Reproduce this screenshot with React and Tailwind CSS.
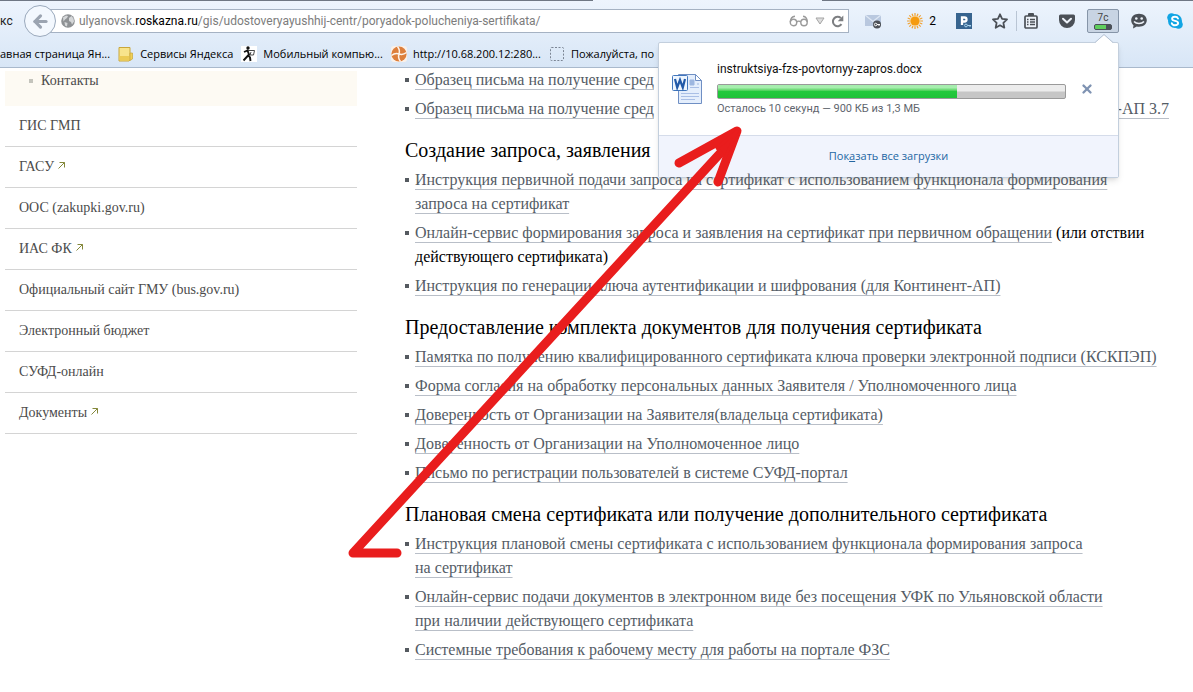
import { ArrowLeft, X } from 'lucide-react'

const bookmarks = [
  { label: 'Сервисы Яндекса', icon: FolderIcon },
  { label: 'Мобильный компью...', icon: RunnerIcon },
  { label: 'http://10.68.200.12:280...', icon: JoomlaIcon },
  { label: 'Пожалуйста, по', icon: BlankIcon },
]

const sideLinks = [
  { label: 'ГИС ГМП' },
  { label: 'ГАСУ', external: true },
  { label: 'ООС (zakupki.gov.ru)' },
  { label: 'ИАС ФК', external: true },
  { label: 'Официальный сайт ГМУ (bus.gov.ru)' },
  { label: 'Электронный бюджет' },
  { label: 'СУФД-онлайн' },
  { label: 'Документы', external: true },
]

const sections = [
  {
    items: [
      { lines: ['Образец письма на получение сред'] },
      { lines: ['Образец письма на получение сред'], tail: '-АП 3.7' },
    ],
  },
  {
    title: 'Создание запроса, заявления',
    items: [
      { lines: ['Инструкция первичной подачи запроса на сертификат с использованием функционала формирования', 'запроса на сертификат'] },
      {
        lines: ['Онлайн-сервис формирования запроса и заявления на сертификат при первичном обращении'],
        note: ['(или отствии', 'действующего сертификата)'],
      },
      { lines: ['Инструкция по генерации ключа аутентификации и шифрования (для Континент-АП)'] },
    ],
  },
  {
    title: 'Предоставление комплекта документов для получения сертификата',
    items: [
      { lines: ['Памятка по получению квалифицированного сертификата ключа проверки электронной подписи (КСКПЭП)'] },
      { lines: ['Форма согласия на обработку персональных данных Заявителя / Уполномоченного лица'] },
      { lines: ['Доверенность от Организации на Заявителя(владельца сертификата)'] },
      { lines: ['Доверенность от Организации на Уполномоченное лицо'] },
      { lines: ['Письмо по регистрации пользователей в системе СУФД-портал'] },
    ],
  },
  {
    title: 'Плановая смена сертификата или получение дополнительного сертификата',
    items: [
      { lines: ['Инструкция плановой смены сертификата с использованием функционала формирования запроса', 'на сертификат'] },
      { lines: ['Онлайн-сервис подачи документов в электронном виде без посещения УФК по Ульяновской области', 'при наличии действующего сертификата'] },
      { lines: ['Системные требования к рабочему месту для работы на портале ФЗС'] },
    ],
  },
]

function FolderIcon() {
  return (
    <svg width="16" height="16" viewBox="0 0 16 16" className="shrink-0">
      <path d="M1 1.500h11v12.500l-1 1H1z" fill="#f8e48c" stroke="#c9a63b" />
      <path d="M1.500 10h10v4.500h-10z" fill="#eccb55" />
      <path d="M12 7h2.500v6L12 14.500z" fill="#f0cf55" stroke="#c9a63b" strokeWidth=".7" />
    </svg>
  )
}

function RunnerIcon() {
  return (
    <svg width="16" height="16" viewBox="0 0 16 16" className="shrink-0 bg-white">
      <circle cx="7" cy="2" r="1.700" fill="#111" />
      <path d="M3 6l3.500-1.500L8 8.500l-5.500 6M7 9l2 2.500.5 3.500" fill="none" stroke="#111" strokeWidth="1.900" />
      <path d="M7 4.500h6.500l-1 4.500H9l1-3" fill="none" stroke="#333" strokeWidth=".9" />
    </svg>
  )
}

function JoomlaIcon() {
  return (
    <svg width="16" height="16" viewBox="0 0 16 16" className="shrink-0">
      <rect width="16" height="16" rx="3" fill="#fbf1e8" />
      <circle cx="8" cy="8" r="7.600" fill="#dd7f3c" />
      <path d="M8 8C5 7 3 7.500.5 9.500M8 8c1-3 .5-5-1.500-7.500M8 8c3 1 5 .5 7.500-1.500M8 8c-1 3-.5 5 1.500 7.500" stroke="#fdf3ea" strokeWidth="1.500" fill="none" />
    </svg>
  )
}

function BlankIcon() {
  return (
    <svg width="16" height="16" viewBox="0 0 16 16" className="shrink-0">
      <rect x="1.500" y="1.500" width="13" height="13" rx="1" fill="none" stroke="#7b8594" strokeDasharray="2 1.500" />
    </svg>
  )
}

function GlobeIcon() {
  return (
    <svg width="14" height="14" viewBox="0 0 14 14" className="shrink-0">
      <circle cx="7" cy="7" r="6.800" fill="#8e9194" />
      <path d="M2 3.500l3-2 2 .5-1 2-2 1.500-1.500 2zM8 4l2.500-2 2 2.500.5 3-2 3-1-2.500-2-1zM3.500 8l3 1-.5 3.500-2-1z" fill="#d5d7d9" />
    </svg>
  )
}

function GlassesIcon() {
  return (
    <svg width="20" height="12" viewBox="0 0 20 12" fill="none" stroke="#9a9a9a" strokeWidth="1.400">
      <circle cx="4.500" cy="7.500" r="3.200" />
      <circle cx="15" cy="7.500" r="3.200" />
      <path d="M7.700 7c1-1 3-1 4 0M1.300 7C1.500 4 3 1.500 6 1.200M18.200 7c0-3-1.500-5.500-4.200-5.800" />
    </svg>
  )
}

function ReloadIcon() {
  return (
    <svg width="13" height="13" viewBox="0 0 13 13">
      <path d="M10.500 9.200A4.700 4.700 0 1 1 9.800 3" fill="none" stroke="#7d7f82" strokeWidth="2" />
      <path d="M12.300.5v5.700H6.700z" fill="#7d7f82" />
    </svg>
  )
}

function MailKeyIcon() {
  return (
    <svg width="16" height="16" viewBox="0 0 16 16">
      <rect y="2" width="16" height="11" fill="#b9c8df" />
      <path d="M0 2l8 6.500L16 2" fill="none" stroke="#dfe8f4" strokeWidth="1.300" />
      <circle cx="12" cy="11.500" r="4" fill="#4c5056" />
      <circle cx="10.700" cy="11.500" r="1.300" fill="none" stroke="#fff" />
      <path d="M12 11.500h3M14 11.500v1.500" stroke="#fff" />
    </svg>
  )
}

function SunIcon() {
  return (
    <svg width="16" height="16" viewBox="0 0 16 16">
      <path d="M8 0v16M0 8h16M2.300 2.300l11.400 11.400M13.700 2.300L2.300 13.700M5 .7l6 14.600M11 .7L5 15.300M.7 5l14.600 6M15.300 5L.7 11" stroke="#f0a030" strokeWidth="1.200" />
      <circle cx="8" cy="8" r="5.300" fill="#f8e3bd" />
      <circle cx="8" cy="8" r="4.600" fill="#f59b10" />
    </svg>
  )
}

function PasswordIcon() {
  return (
    <svg width="16" height="16" viewBox="0 0 16 16">
      <rect width="16" height="16" fill="#37648f" />
      <path d="M6 12V4.500h2.500a2 2 0 0 1 0 4H6" fill="none" stroke="#fff" strokeWidth="2.300" />
      <circle cx="10" cy="12.500" r="1.400" fill="none" stroke="#a9d4ee" />
      <path d="M11.500 12.500H15M14 12.500V14" stroke="#a9d4ee" />
    </svg>
  )
}

function StarIcon() {
  return (
    <svg width="16" height="16" viewBox="0 0 16 16">
      <path d="M8 1.300l2.100 4.500 4.900.6-3.600 3.400.9 4.900L8 12.300l-4.300 2.400.9-4.900L1 6.400l4.900-.6z" fill="none" stroke="#4b5057" strokeWidth="1.800" strokeLinejoin="round" />
    </svg>
  )
}

function ClipboardIcon() {
  return (
    <svg width="16" height="16" viewBox="0 0 16 16">
      <rect x="5" y="0" width="6" height="4" rx="1" fill="#4b5057" />
      <rect x="2" y="3" width="12" height="12" rx="1" fill="#eef3fa" stroke="#4b5057" strokeWidth="1.700" />
      <path d="M4 6.500h1.500M7 6.500h5M4 9h1.500M7 9h5M4 11.500h1.500M7 11.500h5" stroke="#4b5057" strokeWidth="1.500" />
    </svg>
  )
}

function PocketIcon() {
  return (
    <svg width="16" height="16" viewBox="0 0 16 16">
      <path d="M1.500 1.500h13A1.500 1.500 0 0 1 16 3v4a8 8 0 0 1-16 0V3a1.500 1.500 0 0 1 1.500-1.500z" fill="#4b5057" />
      <path d="M4 5.700l4 3.800 4-3.800" fill="none" stroke="#eef3fa" strokeWidth="2" strokeLinecap="round" strokeLinejoin="round" />
    </svg>
  )
}

function ChatIcon() {
  return (
    <svg width="16" height="16" viewBox="0 0 16 16">
      <path d="M8 .8c4.500 0 7.800 2.800 7.800 6.500S12.500 13.800 8 13.800c-.8 0-1.500 0-2.200-.2L2 15.500l.5-3.200C1 11 .2 9.300.2 7.300.2 3.600 3.500.8 8 .8z" fill="#4b5057" />
      <circle cx="5.300" cy="5.500" r="1.300" fill="#eef3fa" />
      <circle cx="10.700" cy="5.500" r="1.300" fill="#eef3fa" />
      <path d="M3 8.500c2.500 2.600 7.500 2.600 10 0" fill="none" stroke="#eef3fa" strokeWidth="1.600" />
    </svg>
  )
}

function SkypeIcon() {
  return (
    <svg width="16" height="16" viewBox="0 0 16 16">
      <circle cx="8" cy="8" r="7" fill="#12a5e4" />
      <circle cx="4.500" cy="4.500" r="4.300" fill="#12a5e4" />
      <circle cx="11.500" cy="11.500" r="4.300" fill="#12a5e4" />
      <path d="M11 5.500C10.500 4 9.500 3.700 8 3.700c-1.800 0-2.900.8-2.900 2 0 3 6 1.300 6 4.400 0 1.400-1.300 2.200-3.100 2.200-1.700 0-2.800-.6-3.200-2.100" fill="none" stroke="#fff" strokeWidth="1.900" strokeLinecap="round" />
    </svg>
  )
}

function WordIcon() {
  return (
    <svg width="32" height="32" viewBox="0 0 32 32" className="shrink-0">
      <path d="M7.500 1.500h17l6 6v23h-23z" fill="#e4eefc" stroke="#6f8fc4" />
      <path d="M24.500 1.500v6h6z" fill="#fff" stroke="#6f8fc4" />
      <path d="M19 7h4v5h-4zM26 11h2" fill="#9db7e0" stroke="#9db7e0" />
      <path d="M19 14.500h9M10 20.500h18M10 23.500h18M10 26.500h14" stroke="#a9bfe6" />
      <rect x="1.500" y="2.500" width="15" height="15" rx="1" fill="#eef6ff" stroke="#4277bd" />
      <path d="M4 6l2.200 8.500L9 7l2.800 7.500L14 6" fill="none" stroke="#2159a8" strokeWidth="2.200" />
    </svg>
  )
}

function ExternalIcon() {
  return (
    <svg width="7" height="7" viewBox="0 0 7 7" className="mb-1 ml-1 inline-block" fill="none" stroke="#84883a">
      <path d="M.5 6.500l6-6M1.500.5h5v5" />
    </svg>
  )
}

function IconButton({ label, className = '', children }) {
  return (
    <button type="button" aria-label={label} className={`flex shrink-0 items-center ${className}`}>
      {children}
    </button>
  )
}

function Toolbar() {
  return (
    <header className="border-b border-[#a9b9cc] bg-linear-to-b from-[#edf4fd] to-[#d8e6f6] font-[Roboto,sans-serif] text-xs text-black">
      {/* Bottom edge of the tab strip */}
      <div className="flex h-px">
        <div className="w-[593px] bg-[#6f7784]" />
        <div className="w-[229px]" />
        <div className="flex-1 bg-[#6f7784]" />
      </div>

      {/* Address bar */}
      <div className="flex h-10 items-center pr-[10px]">
        <span className="w-6 shrink-0 overflow-hidden text-[#222]">кс</span>
        <button
          type="button"
          aria-label="Назад"
          className="z-10 flex size-8 shrink-0 items-center justify-center rounded-full border border-[#9aa9bc] bg-[#f3f8fe]"
        >
          <ArrowLeft size={19} strokeWidth={4} className="text-[#9ba4b1]" />
        </button>
        <div className="-ml-2 flex h-6 min-w-0 flex-1 items-center border border-[#a5b2c3] bg-white pr-1 pl-3">
          <GlobeIcon />
          <a href="#" className="ml-1 flex-1 truncate text-[#7c7c7c]">
            ulyanovsk.<span className="text-black">roskazna.ru</span>/gis/udostoveryayushhij-centr/poryadok-polucheniya-sertifikata/
          </a>
          <IconButton label="Режим чтения"><GlassesIcon /></IconButton>
          <IconButton label="История" className="ml-1.5">
            <svg width="10" height="8" viewBox="0 0 10 8"><path d="M1 1h8L5 7z" fill="#dedede" stroke="#a5a5a5" /></svg>
          </IconButton>
          <IconButton label="Обновить" className="ml-1.5"><ReloadIcon /></IconButton>
        </div>
        <IconButton label="Почта" className="ml-4"><MailKeyIcon /></IconButton>
        <IconButton label="Погода" className="ml-[26px] gap-1.5"><SunIcon />2</IconButton>
        <IconButton label="Пароли" className="ml-5"><PasswordIcon /></IconButton>
        <IconButton label="В закладки" className="ml-5"><StarIcon /></IconButton>
        <div className="ml-2 h-5 w-px bg-[#b9c5d4]" />
        <IconButton label="Список закладок" className="ml-1.5"><ClipboardIcon /></IconButton>
        <IconButton label="Pocket" className="ml-5"><PocketIcon /></IconButton>
        <button
          type="button"
          className="ml-3 flex h-6 w-8 shrink-0 flex-col items-center justify-center gap-px rounded-xs border border-[#8695a8] bg-[#c8d4e3] text-[10px] leading-[10px] text-[#444]"
        >
          7с
          <span className="flex h-1.5 w-[18px] overflow-hidden rounded-xs border border-[#4b5057] bg-[#4b5057]">
            <span className="w-2/3 bg-[#5fce5c]" />
          </span>
        </button>
        <IconButton label="Чат" className="ml-3"><ChatIcon /></IconButton>
        <IconButton label="Skype" className="ml-5"><SkypeIcon /></IconButton>
      </div>

      {/* Bookmarks */}
      <nav className="flex h-[26px] items-center gap-2 overflow-hidden font-[Open_Sans,sans-serif] text-[11px] whitespace-nowrap">
        <a href="#">авная страница Ян...</a>
        {bookmarks.map(({ label, icon: Icon }) => (
          <a key={label} href="#" className="flex items-center gap-1.5">
            <Icon />
            {label}
          </a>
        ))}
      </nav>
    </header>
  )
}

function DownloadPanel() {
  return (
    <section className="absolute top-[42px] right-[74px] z-10 w-[461px] rounded-xs border border-[#c3cfdd] bg-white font-[Roboto,sans-serif] text-xs shadow-md">
      <svg width="18" height="9" viewBox="0 0 18 9" className="absolute -top-[9px] right-[5px]">
        <path d="M0 9l9-8 9 8z" fill="#fff" />
        <path d="M0 8.500l9-8 9 8" fill="none" stroke="#b4c1d1" />
      </svg>
      <div className="flex h-[92px] items-center pr-6 pl-3">
        <WordIcon />
        <div className="ml-3.5 flex-1">
          <p className="leading-4 text-[#111]">instruktsiya-fzs-povtornyy-zapros.docx</p>
          <div
            role="progressbar"
            aria-valuenow={69}
            className="mt-[7px] flex h-[15px] rounded-xs border border-[#9a9a9a] bg-linear-to-b from-[#ececec] from-45% to-[#c6c6c6] to-55%"
          >
            <div className="w-[69%] bg-linear-to-b from-[#a6eeae] from-20% via-[#22c93c] via-50% to-[#1fc238]" />
          </div>
          <p className="mt-0.5 text-[11px] leading-4 text-[#5f666e]">Осталось 10 секунд — 900 КБ из 1,3 МБ</p>
        </div>
        <IconButton label="Отменить" className="ml-3.5">
          <X size={14} strokeWidth={4} className="text-[#7f93b2]" />
        </IconButton>
      </div>
      <div className="flex h-[42px] items-center justify-center border-t border-[#d5dcea] bg-[#f1f4fd] font-[Open_Sans,sans-serif] text-[11px]">
        <a href="#" className="text-[#2467a3]">
          Пок<span className="underline">а</span>зать все загрузки
        </a>
      </div>
    </section>
  )
}

function Sidebar() {
  return (
    <aside className="ml-[5px] w-[352px] shrink-0 text-sm text-[#4b4b4b]">
      <div className="mt-[3px] flex h-[35px] bg-[#fdfaf3] pl-6">
        <span className="mt-2 mr-2 size-1 bg-[#c4c4bc]" />
        <a href="#" className="leading-5">Контакты</a>
      </div>
      <ul>
        {sideLinks.map((link) => (
          <li key={link.label} className="flex h-[41px] items-center border-b border-[#d4d4d4] pl-3.5">
            <a href="#">
              {link.label}
              {link.external && <ExternalIcon />}
            </a>
          </li>
        ))}
      </ul>
    </aside>
  )
}

const linkStyle =
  'text-[#545c66] underline decoration-[#b9bfc8] decoration-1 underline-offset-4 [text-decoration-skip-ink:none]'

function DocLink({ item }) {
  return (
    <li className="flex gap-1.5">
      <span className="mt-2.5 size-1 shrink-0 bg-[#555a60]" />
      <div>
        <a href="#" className={linkStyle}>
          {item.lines[0]}
          {item.lines[1] && <><br />{item.lines[1]}</>}
        </a>
        {item.note && <> {item.note[0]}<br />{item.note[1]}</>}
      </div>
      {item.tail && <a href="#" className={`mr-6 ml-auto ${linkStyle}`}>{item.tail}</a>}
    </li>
  )
}

export default function App() {
  return (
    <div className="relative overflow-hidden bg-white font-[Liberation_Serif,serif]">
      <Toolbar />
      <DownloadPanel />
      <div className="flex">
        <Sidebar />
        <main className="ml-12 flex-1 pb-7 text-base leading-6 text-black">
          {sections.map((section, i) => (
            <section key={i} className={i > 0 ? 'relative z-20' : ''}>
              {section.title && <h2 className="pt-[15px] pb-1 text-xl leading-7">{section.title}</h2>}
              <ul className="flex flex-col gap-[5px]">
                {section.items.map((item, n) => (
                  <DocLink key={n} item={item} />
                ))}
              </ul>
            </section>
          ))}
        </main>
      </div>

      {/* Marker arrow pointing at the download */}
      <svg
        width="400"
        height="440"
        viewBox="0 0 400 440"
        className="pointer-events-none absolute top-[124px] left-[345px] z-30"
        fill="none"
        stroke="#e91d1d"
        strokeWidth="9"
        strokeLinecap="round"
        strokeLinejoin="round"
      >
        <path d="M52 429H8L380 24" />
        <path d="M334 39l58-32-19 51" />
        <path d="M372 24l20-17-12 27z" fill="#e91d1d" strokeWidth="3" />
      </svg>
    </div>
  )
}
